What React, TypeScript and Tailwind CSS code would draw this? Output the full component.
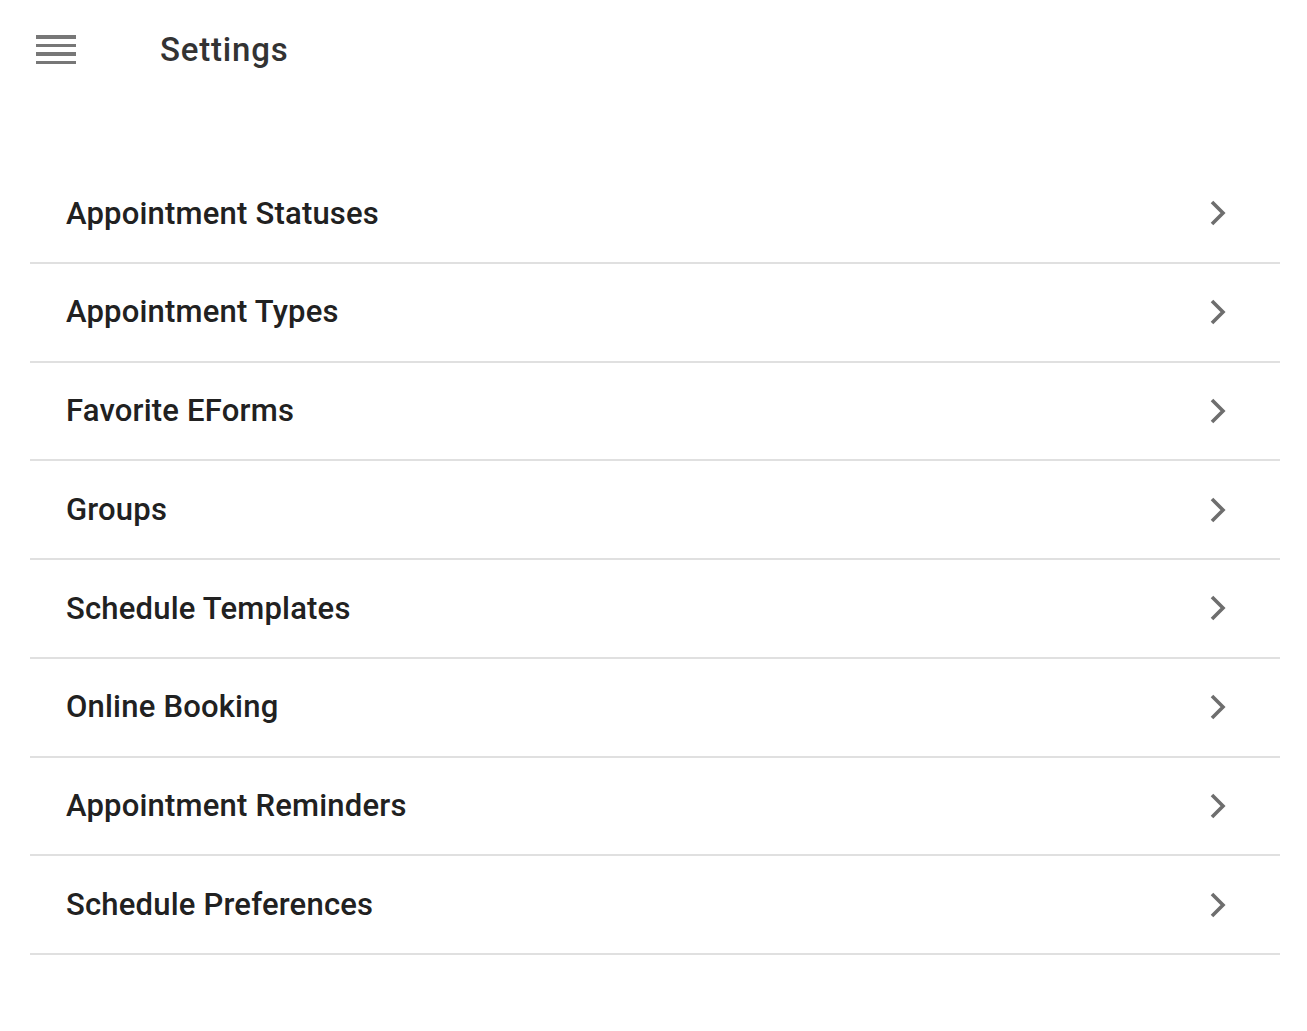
import React from "react";

const items = [
  "Appointment Statuses",
  "Appointment Types",
  "Favorite EForms",
  "Groups",
  "Schedule Templates",
  "Online Booking",
  "Appointment Reminders",
  "Schedule Preferences",
];

function Chevron() {
  return (
    <svg width="24" height="30" viewBox="0 0 24 30" className="shrink-0">
      <polyline
        points="6,4 17,15 6,26"
        fill="none"
        stroke="#6e6e6e"
        strokeWidth="3.6"
        strokeLinecap="butt"
        strokeLinejoin="miter"
      />
    </svg>
  );
}

export default function App() {
  return (
    <div className="min-h-screen w-full bg-white font-['Roboto',sans-serif]">
      <header className="flex h-[100px] items-center pl-[36px]">
        <div className="flex w-[40px] flex-col gap-[5px] -mt-[1px]">
          <span className="block h-[3.5px] bg-[#777777]" />
          <span className="block h-[3.5px] bg-[#777777]" />
          <span className="block h-[3.5px] bg-[#777777]" />
          <span className="block h-[3.5px] bg-[#777777]" />
        </div>
        <h1 className="ml-[84px] text-[33px] font-medium tracking-[0.8px] text-[#333333]">
          Settings
        </h1>
      </header>
      <ul className="mt-[65px] ml-[30px] w-[1250px]">
        {items.map((label) => (
          <li
            key={label}
            className="flex h-[98.75px] items-center justify-between border-b-2 border-[#e0e0e0] pl-[36px] pr-[50px]"
          >
            <span className="mt-[1px] text-[31px] font-medium tracking-[0.2px] text-[#212121]">
              {label}
            </span>
            <Chevron />
          </li>
        ))}
      </ul>
    </div>
  );
}
